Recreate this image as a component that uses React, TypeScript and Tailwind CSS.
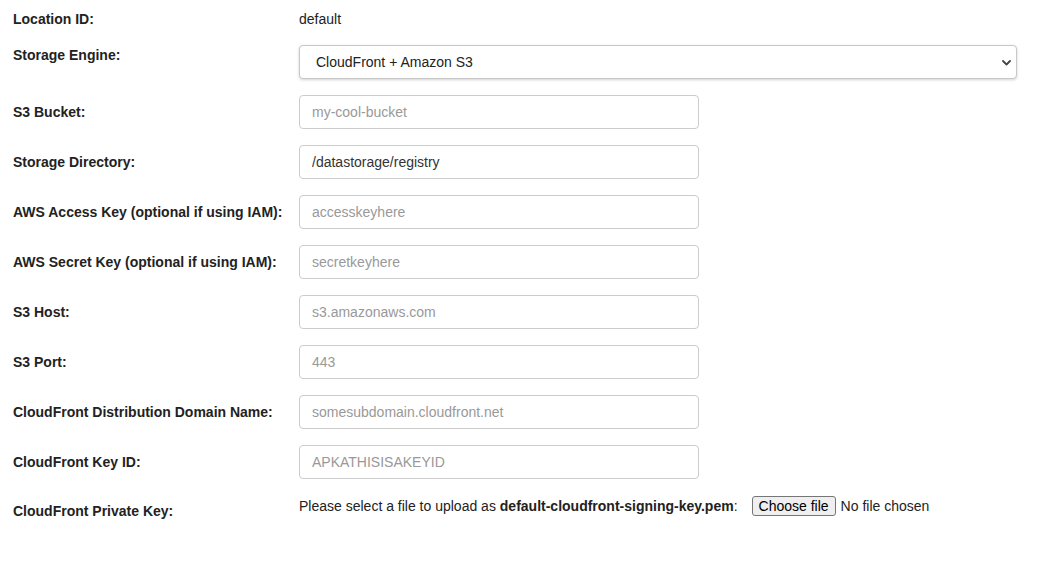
import React from "react";

const font = { fontFamily: '"Liberation Sans", Arial, Helvetica, sans-serif' };

function Label({ children, className = "" }: { children: React.ReactNode; className?: string }) {
  return (
    <div className={`w-[286px] shrink-0 text-[14px] font-bold text-[#222] leading-[16px] ${className}`}>
      {children}
    </div>
  );
}

function TextRow({ label, placeholder, value }: { label: string; placeholder?: string; value?: string }) {
  return (
    <div className="flex items-center h-[50px] pt-[7px] pb-[9px]">
      <Label>{label}</Label>
      <input
        type="text"
        defaultValue={value}
        placeholder={placeholder}
        className="w-[400px] h-[34px] border border-[#cccccc] rounded-[4px] px-[12px] text-[14px] text-[#333] placeholder:text-[#999] bg-white outline-none"
        style={font}
      />
    </div>
  );
}

export default function App() {
  return (
    <div className="w-[1040px] h-[574px] bg-white pl-[13px]" style={font}>
      <div className="flex items-center h-[38px]">
        <Label>Location ID:</Label>
        <div className="text-[14px] text-[#222]">default</div>
      </div>
      <div className="flex items-start h-[50px] pt-[7px]">
        <Label className="mt-[2px]">Storage Engine:</Label>
        <div className="relative w-[718px] h-[34px] border border-[#c8c8c8] rounded-[4px] bg-white shadow-[0_1px_3px_rgba(0,0,0,0.18)] flex items-center pl-[16px] text-[14px] text-[#222]">
          CloudFront + Amazon S3
          <svg className="absolute right-[5px] top-[14px]" width="9" height="6" viewBox="0 0 9 6">
            <path d="M1 1 L4.5 4.5 L8 1" stroke="#444" strokeWidth="1.8" fill="none" strokeLinecap="round" strokeLinejoin="round" />
          </svg>
        </div>
      </div>
      <TextRow label="S3 Bucket:" placeholder="my-cool-bucket" />
      <TextRow label="Storage Directory:" value="/datastorage/registry" />
      <TextRow label="AWS Access Key (optional if using IAM):" placeholder="accesskeyhere" />
      <TextRow label="AWS Secret Key (optional if using IAM):" placeholder="secretkeyhere" />
      <TextRow label="S3 Host:" placeholder="s3.amazonaws.com" />
      <TextRow label="S3 Port:" placeholder="443" />
      <TextRow label="CloudFront Distribution Domain Name:" placeholder="somesubdomain.cloudfront.net" />
      <TextRow label="CloudFront Key ID:" placeholder="APKATHISISAKEYID" />
      <div className="flex items-start pt-[8px]">
        <Label className="mt-[7px]">CloudFront Private Key:</Label>
        <div className="flex items-center text-[14px] text-[#222] leading-[16px]">
          <span>
            Please select a file to upload as <b>default-cloudfront-signing-key.pem</b>:
          </span>
          <span className="ml-[14px] h-[20px] px-[6px] border border-[#767676] rounded-[3px] bg-[#efefef] flex items-center text-[14px] text-black">
            Choose file
          </span>
          <span className="ml-[5px] text-[#222]">No file chosen</span>
        </div>
      </div>
    </div>
  );
}
